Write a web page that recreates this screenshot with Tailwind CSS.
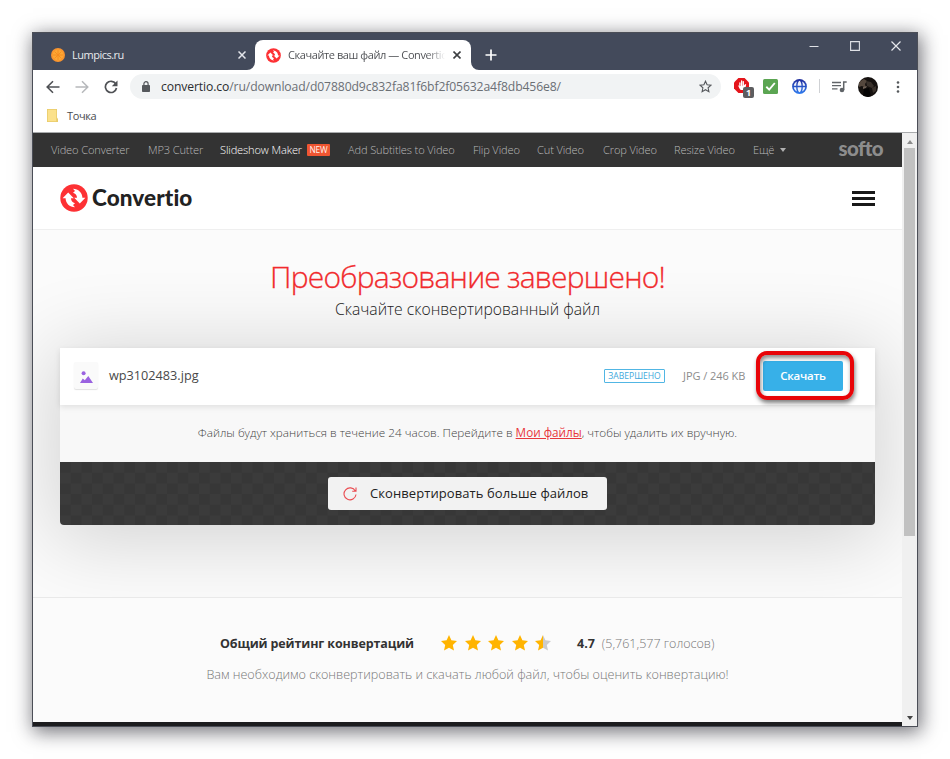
<!DOCTYPE html>
<html lang="ru">
<head>
<meta charset="utf-8">
<title>Convertio</title>
<script src="https://cdn.jsdelivr.net/npm/@tailwindcss/browser@4"></script>
</head>
<body class="bg-white w-[950px] h-[759px] overflow-hidden pt-8 pl-8 font-['Open_Sans','Noto_Sans',sans-serif]">
<div class="w-[886px] h-[695px] border border-[#4b4e57] bg-white flex flex-col shadow-[2px_4px_18px_1px_rgba(20,20,30,0.6)]">

  <!-- tab strip -->
  <div class="h-[37px] shrink-0 bg-[#434a5b] flex text-[11px] leading-[14px]">
    <div class="w-[222px] h-full flex items-center pt-[7px] pl-[18px] text-[#e9eaee]">
      <svg class="w-[14px] h-[14px] shrink-0" viewBox="0 0 14 14"><circle cx="7" cy="7" r="7" fill="#f9942e"/><circle cx="7" cy="7" r="5.4" fill="#fda733"/><path d="M7 2v10M2 7h10M3.5 3.5l7 7M10.500 3.5l-7 7" stroke="#f58c1f" stroke-width=".9"/></svg>
      <span class="ml-[7px] w-[130px] whitespace-nowrap tracking-[-0.5px]">Lumpics.ru</span>
      <svg class="w-2 h-2 ml-[36px] shrink-0" viewBox="0 0 8 8"><path d="M.5.5l7 7M7.500.5l-7 7" stroke="#e4e6eb" stroke-width="1.500"/></svg>
    </div>
    <div class="relative w-[216px] h-[30px] mt-[7px] bg-white rounded-t-[8px] flex items-center pl-[11px] text-[#4a4c50]">
      <svg class="absolute -left-2 bottom-0 w-2 h-2" viewBox="0 0 8 8"><path d="M8 0v8H0a8 8 0 0 0 8-8z" fill="#fff"/></svg>
      <svg class="absolute -right-2 bottom-0 w-2 h-2" viewBox="0 0 8 8"><path d="M0 0v8h8a8 8 0 0 1-8-8z" fill="#fff"/></svg>
      <svg class="w-[15px] h-[15px] shrink-0" viewBox="0 0 28 28"><use href="#mark"/></svg>
      <span class="ml-[7px] w-[157px] whitespace-nowrap tracking-[-0.42px] bg-linear-to-r from-[#4a4c50] from-88% to-white bg-clip-text text-transparent">Скачайте ваш файл — Convertic</span>
      <svg class="w-2 h-2 ml-[8px] shrink-0" viewBox="0 0 8 8"><path d="M.5.5l7 7M7.500.5l-7 7" stroke="#3d3f42" stroke-width="1.600"/></svg>
    </div>
    <svg class="w-[12px] h-[12px] mt-[16px] ml-[14px]" viewBox="0 0 12 12"><path d="M6 .5v11M.5 6h11" stroke="#fff" stroke-width="1.700"/></svg>
    <div class="ml-auto flex gap-[31px] mt-[8px] mr-[16px]">
      <svg class="w-[10px] h-[10px]" viewBox="0 0 10 10"><path d="M.5 5.500h9" stroke="#dfe1e6" stroke-width="1"/></svg>
      <svg class="w-[10px] h-[10px]" viewBox="0 0 10 10"><path d="M.6.6h8.800v8.800H.6z" fill="none" stroke="#dfe1e6" stroke-width="1.100"/></svg>
      <svg class="w-[10px] h-[10px]" viewBox="0 0 10 10"><path d="M.5.5l9 9M9.500.5l-9 9" stroke="#e6e8ec" stroke-width="1.200"/></svg>
    </div>
  </div>

  <!-- toolbar -->
  <div class="h-[32px] shrink-0 flex items-center bg-white">
    <svg class="w-[14px] h-[14px] ml-[13px] mt-px" viewBox="0 0 14 14" fill="none" stroke="#4f5155" stroke-width="1.600"><path d="M13.500 7H1.500M7 1.200L1.200 7 7 12.800"/></svg>
    <svg class="w-[14px] h-[14px] ml-[15px] mt-px" viewBox="0 0 14 14" fill="none" stroke="#b6b8bb" stroke-width="1.500"><path d="M.5 7h12M7 1.200L12.800 7 7 12.800"/></svg>
    <svg class="w-[14px] h-[14px] ml-[15px] mt-px" viewBox="0 0 14 14"><path d="M11.700 3.800A5.600 5.600 0 1 0 12.500 8" fill="none" stroke="#4f5155" stroke-width="1.700"/><path d="M13.500.5v5.700H7.800z" fill="#4f5155"/></svg>
    <div class="ml-[12px] mt-px w-[591px] h-[25px] rounded-full bg-[#f1f3f4] flex items-center">
      <svg class="ml-[12px] w-[8px] h-[11px] shrink-0" viewBox="0 0 8 11"><rect y="4" width="8" height="7" rx=".8" fill="#55585c"/><path d="M1.900 4.500V2.800a2.100 2.100 0 0 1 4.200 0v1.700" fill="none" stroke="#55585c" stroke-width="1.200"/></svg>
      <span class="ml-[11px] text-[12.200px] leading-4 text-[#6b6f74] whitespace-nowrap w-[530px] tracking-[-0.12px]"><span class="text-[#2b2d30]">convertio.co</span>/ru/download/d07880d9c832fa81f6bf2f05632a4f8db456e8/</span>
      <svg class="ml-[8px] w-[13px] h-[13px] shrink-0" viewBox="0 0 13 13"><path d="M6.500 1.200l1.600 3.600 3.900.4-2.900 2.600.8 3.900-3.400-2-3.400 2 .8-3.900L1 5.200l3.900-.4z" fill="none" stroke="#55585c" stroke-width="1.100"/></svg>
    </div>
    <div class="relative ml-[13px] w-[16px] h-[16px] shrink-0">
      <svg class="w-[15px] h-[15px]" viewBox="0 0 15 15"><path d="M4.400 0h6.200L15 4.400v6.200L10.600 15H4.400L0 10.600V4.400z" fill="#e4151b"/><path d="M5.900 9V5M7.600 8V3M9.300 8V3.600" stroke="#fff" stroke-width="1.300" stroke-linecap="round"/><path d="M3.800 7l1.600 1.200 4.500-.7 1.300-1.500 1 .5-1.200 5.500H7a3 3 0 0 1-1.500-1.500z" fill="#fff"/></svg>
      <span class="absolute left-[9px] top-[9px] w-[11px] h-[11px] bg-[#5d5d5f] rounded-[2px] text-white text-[9px] leading-[11px] font-bold text-center">1</span>
    </div>
    <svg class="ml-[13px] w-[15px] h-[15px] shrink-0" viewBox="0 0 15 15"><rect width="15" height="15" rx="1.500" fill="#5ba552"/><path d="M3.300 7.800l2.900 2.800L11.800 4" fill="none" stroke="#fff" stroke-width="1.900"/></svg>
    <svg class="ml-[14px] w-[15px] h-[15px] shrink-0" viewBox="0 0 15 15"><defs><linearGradient id="globe" x2="0" y2="1"><stop stop-color="#1f2a9a"/><stop offset="1" stop-color="#2f7cf0"/></linearGradient></defs><circle cx="7.500" cy="7.500" r="7.400" fill="url(#globe)"/><path d="M4.900 2.600C3.200 3.500 2 5 1.800 6.800h2.400c0-1.600.2-3 .7-4.200zM10.100 2.600c1.700.9 2.900 2.400 3.100 4.200h-2.400c0-1.600-.2-3-.7-4.200zM5.500 6.800C5.600 4 6.700 1.800 7.500 1.800S9.400 4 9.500 6.800zM1.800 8.200h2.400c0 1.600.2 3 .7 4.200C3.200 11.500 2 10 1.800 8.200zM13.200 8.200h-2.400c0 1.600-.2 3-.7 4.200 1.700-.9 2.900-2.400 3.100-4.200zM5.500 8.200h4c-.1 2.800-1.200 5-2 5S5.600 11 5.500 8.200z" fill="#fff" fill-opacity=".93"/></svg>
    <div class="w-px h-[14px] bg-[#cfd1d4] ml-[12px]"></div>
    <svg class="ml-[12px] w-[15px] h-[13px] shrink-0" viewBox="0 0 15 13"><path d="M0 2.500h9M0 5.700h9M0 8.900h5.500" stroke="#606468" stroke-width="1.300"/><path d="M11.700 10V2h3" fill="none" stroke="#606468" stroke-width="1.500"/><circle cx="10" cy="10" r="2.300" fill="#606468"/></svg>
    <svg class="ml-[11px] mt-px w-[20px] h-[20px] shrink-0" viewBox="0 0 20 20"><defs><clipPath id="av"><circle cx="10" cy="10" r="10"/></clipPath></defs><g clip-path="url(#av)"><path fill="#15110f" d="M0 0h20v20H0z"/><path fill="#54473d" d="M1 5l5-3 3 2-2 3 1 4-4-2-3 1z"/><path fill="#3a322c" d="M8 4l5 1 3 4-2 2-5-2zM14 11l4-2v5l-3 2z"/><path fill="#6c5f55" d="M5 10l4-1-1 2-3 1z"/><path fill="#050404" d="M6 12l5-1 2 9H5z"/></g></svg>
    <svg class="ml-[18px] mt-px w-[4px] h-[12px] shrink-0" viewBox="0 0 4 12"><g fill="#55585c"><circle cx="2" cy="1.500" r="1.300"/><circle cx="2" cy="6" r="1.300"/><circle cx="2" cy="10.500" r="1.300"/></g></svg>
  </div>

  <!-- bookmarks -->
  <div class="h-[31px] shrink-0 flex items-center bg-white border-b border-[#a9abad] pb-[3px]">
    <svg class="ml-[14px] w-[11px] h-[13px]" viewBox="0 0 11 13"><path d="M0 0h10v8.500l1 1.500v3H0z" fill="#e9cc6c"/><path d="M.8.8h8.400v11.400H.8z" fill="#fbe18b"/></svg>
    <span class="ml-[9px] text-[11px] leading-4 text-[#4a4c50] tracking-[-0.4px]">Точка</span>
  </div>

  <div class="flex flex-1 min-h-0">
    <div class="w-[869px] flex flex-col bg-[#fbfbfb]">

      <!-- product links -->
      <nav class="h-[34px] shrink-0 bg-[#333] flex items-center text-[11.100px] leading-4 font-light tracking-[-0.14px] text-[#b8b8b8] whitespace-nowrap pl-[18px] pb-px">
        <span class="w-[97px]">Video Converter</span>
        <span class="w-[72px]">MP3 Cutter</span>
        <span class="w-[128px] text-white flex items-center"><span class="w-[81px]">Slideshow Maker</span><span class="ml-[6px] w-[23px] h-[12px] bg-[#ef5531] rounded-[1px] text-[8.300px] leading-[12px] text-center font-normal tracking-[-0.1px] text-[#fff1ec]">NEW</span></span>
        <span class="w-[125px]">Add Subtitles to Video</span>
        <span class="w-[64px]">Flip Video</span>
        <span class="w-[66px]">Cut Video</span>
        <span class="w-[71px]">Crop Video</span>
        <span class="w-[79px]">Resize Video</span>
        <span class="flex items-center gap-[6px]">Ещё <i class="border-x-[3.500px] border-x-transparent border-t-[4px] border-t-[#b0b0b0]"></i></span>
        <span class="ml-auto mr-[19px] mb-[3px] font-['Lato',sans-serif] font-black text-[20.500px] leading-5 tracking-[-0.6px] text-[#8d8d8d]">softo</span>
      </nav>

      <!-- header -->
      <header class="h-[63px] shrink-0 bg-white border-b border-[#efefef] flex items-center pl-[27px] pr-[27px]">
        <svg class="w-[28px] h-[28px]" viewBox="0 0 28 28"><g id="mark"><circle cx="14" cy="14" r="13.700" fill="#fd3134"/><path id="arm" d="M2.600 14.200L8.200 8.600l5.600 5.600H11c0 2.600 1.600 4.500 4 5l-2 1.900 2 2.100C9.700 23.200 5.600 19.200 5.600 14.200z" fill="#fff"/><use href="#arm" transform="rotate(180 14 14)"/></g></svg>
        <span class="ml-[4px] font-['Lato',sans-serif] font-black text-[22.500px] leading-7 tracking-[0.1px] text-[#222]">Convertio</span>
        <div class="ml-auto w-[23px] h-[15px] flex flex-col justify-between"><i class="h-[3px] bg-[#191919]"></i><i class="h-[3px] bg-[#191919]"></i><i class="h-[3px] bg-[#191919]"></i></div>
      </header>

      <!-- result -->
      <main class="h-[368px] shrink-0 border-b border-[#e9e9e9] overflow-hidden flex flex-col items-center">
        <h1 class="mt-[26px] text-[30px] leading-[42px] font-light tracking-[-0.8px] text-[#f22a2d] [-webkit-text-stroke:0.3px_#f22a2d] whitespace-nowrap">Преобразование завершено!</h1>
        <p class="text-[15.700px] leading-[22px] font-light text-[#222] whitespace-nowrap">Скачайте сконвертированный файл</p>
        <section class="mt-[28px] w-[815px] h-[177px] rounded-b-[4px] shadow-[0_8px_80px_8px_rgba(0,0,0,0.16)] flex flex-col">
          <div class="h-[57px] bg-white flex items-center whitespace-nowrap shadow-[0_2px_6px_rgba(0,0,0,0.1)] z-10">
            <div class="ml-[14px] w-[24px] h-[27px] bg-[#fafafa] rounded-[2px] shadow-[0_1px_1px_rgba(0,0,0,0.12)] flex items-center justify-center mt-[-2px]">
              <svg class="w-[13px] h-[12px] mt-[2px]" viewBox="0 0 13 12"><circle cx="3.600" cy="2.200" r="2" fill="#9a62e0"/><path d="M0 12l2.800-4.600 2 1.800L8.300 5l4.700 7z" fill="#9a62e0"/></svg>
            </div>
            <span class="ml-[11px] mt-[-3px] text-[12.700px] leading-5 text-[#494949]">wp3102483.jpg</span>
            <span class="ml-auto mt-[-1px] w-[61px] h-[14px] border border-[#51b6e4] rounded-[1px] text-[8.600px] leading-[12px] text-center text-[#3fa9dc]">ЗАВЕРШЕНО</span>
            <span class="ml-[18px] mt-[-1px] w-[80px] text-[11px] leading-4 text-[#8c8c8c] tracking-[-0.05px]">JPG / 246 KB</span>
            <div class="relative w-[80px] h-[30px] mr-[32px] mt-[-1px] bg-[#37b0e8] rounded-[2px] text-white text-[11.500px] tracking-[-0.25px] font-semibold leading-[29px] text-center">Скачать
              <div class="absolute -left-[7.500px] -top-[10px] w-[98px] h-[49px] border-[4px] border-[#e80408] rounded-[11px] shadow-[1px_3px_4px_rgba(0,0,0,0.5),inset_1px_3px_4px_rgba(0,0,0,0.45)]"></div>
            </div>
          </div>
          <div class="h-[57px] bg-[#f8f8f8] flex items-center justify-center pb-[2px] text-[11.720px] font-light text-[#444] whitespace-nowrap"><p>Файлы будут храниться в течение 24 часов. Перейдите в <a class="text-[#e8373c] font-normal underline">Мои файлы</a>, чтобы удалить их вручную.</p></div>
          <div class="flex-1 rounded-b-[4px] flex items-center justify-center bg-[#3a3a3a] bg-[conic-gradient(#3b3b3b_25%,#373737_0_50%,#3b3b3b_0_75%,#373737_0)] bg-size-[21.400px_21.400px]">
            <div class="w-[279px] h-[33px] bg-[#f2f2f2] rounded-[3px] flex items-center whitespace-nowrap">
              <svg class="ml-[15px] w-[14px] h-[14px]" viewBox="0 0 14 14" fill="none" stroke="#ea4b50" stroke-width="1.100"><path d="M12.300 4A6 6 0 1 0 13 7.500M13 .5V4.300H9.200"/></svg>
              <span class="ml-[13px] mt-[-1px] text-[13px] leading-5 font-medium tracking-[0.08px] text-[#222]">Сконвертировать больше файлов</span>
            </div>
          </div>
        </section>
      </main>

      <!-- rating -->
      <section class="flex-1 border-b-[4px] border-[#1c1c1e] whitespace-nowrap flex flex-col">
        <div class="mt-[36px] ml-[187px] h-[20px] flex items-center text-[12.500px] leading-5">
          <b class="w-[221px] text-[#333] tracking-[-0.12px]">Общий рейтинг конвертаций</b>
          <div class="flex gap-[7.500px] -mt-[2px]">
            <svg class="w-[16px] h-[16px]" viewBox="0 0 16 16"><path id="star" d="M8 0l2.400 5.300 5.600.7-4.200 3.900L13 15.600 8 12.700l-5 2.900 1.200-5.700L0 6l5.600-.7z" fill="#ffb400"/></svg>
            <svg class="w-[16px] h-[16px]" viewBox="0 0 16 16"><use href="#star"/></svg>
            <svg class="w-[16px] h-[16px]" viewBox="0 0 16 16"><use href="#star"/></svg>
            <svg class="w-[16px] h-[16px]" viewBox="0 0 16 16"><use href="#star"/></svg>
            <svg class="w-[16px] h-[16px]" viewBox="0 0 16 16"><path d="M8 0l2.400 5.300 5.600.7-4.200 3.900L13 15.600 8 12.700z" fill="#cbcbcb"/><path d="M8 0v12.700l-5 2.900 1.200-5.700L0 6l5.600-.7z" fill="#ffb400"/></svg>
          </div>
          <b class="ml-[26px] text-[#333]">4.7</b>
          <span class="ml-[7px] font-light text-[#777]">(5,761,577 голосов)</span>
        </div>
        <p class="mt-[11px] text-center text-[12.600px] leading-5 font-light text-[#777]">Вам необходимо сконвертировать и скачать любой файл, чтобы оценить конвертацию!</p>
      </section>
    </div>

    <!-- scrollbar -->
    <div class="w-[15px] bg-[#f0f0f0] flex flex-col items-center">
      <i class="mt-[7px] border-x-[3.500px] border-x-transparent border-b-[4px] border-b-[#8b8b8b]"></i>
      <div class="mt-[4px] w-[11px] h-[388px] bg-[#c1c1c1]"></div>
      <i class="mt-auto mb-[6px] border-x-[3.500px] border-x-transparent border-t-[4px] border-t-[#444]"></i>
    </div>
  </div>
</div>
</body>
</html>
